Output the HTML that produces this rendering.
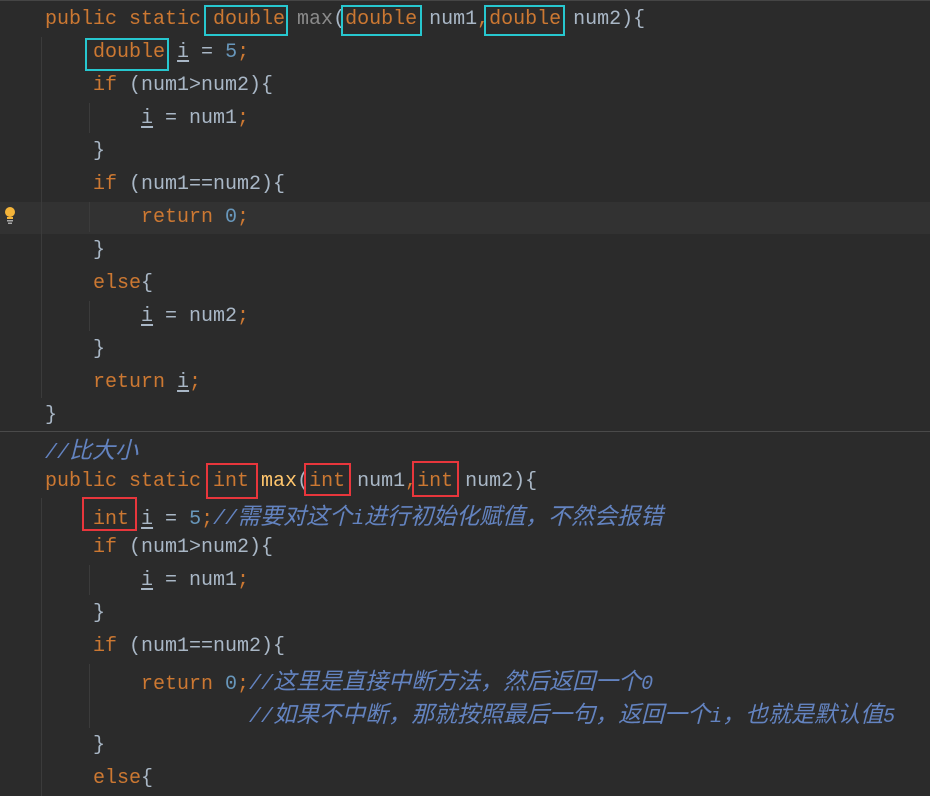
<!DOCTYPE html>
<html><head><meta charset="utf-8"><style>
body{margin:0;width:930px;height:796px;background:#2b2b2b;overflow:hidden;position:relative;font-family:"Liberation Mono","Noto Sans CJK SC",monospace;font-size:20px;color:#a9b7c6}
.l{position:absolute;left:45px;height:33px;line-height:33px;white-space:pre}
.k{color:#cc7832}.n{color:#6897bb}.g{color:#8a8a8a}.y{color:#ffc66d}
.c{color:#6383c0;font-style:italic}
.c b{font-weight:normal;font-family:"Noto Sans CJK SC",sans-serif;font-size:23px;line-height:33px}
.u{text-decoration:underline;text-underline-offset:3px}
.bx{position:absolute;border:2px solid #27c7cf;box-sizing:border-box}
.rb{position:absolute;border:2px solid #e8363c;box-sizing:border-box}
.gd{position:absolute;width:1px;background:#3b3b3b}
</style></head><body>
<div style="position:absolute;left:0;top:202px;width:930px;height:32px;background:#323232"></div>
<div style="position:absolute;left:0;top:431px;width:930px;height:1px;background:#4a4a4a"></div>
<div style="position:absolute;left:0;top:0;width:930px;height:1px;background:#454545"></div>
<div class="gd" style="left:41px;top:37px;height:361px"></div>
<div class="gd" style="left:89px;top:103px;height:30px"></div>
<div class="gd" style="left:89px;top:202px;height:30px"></div>
<div class="gd" style="left:89px;top:301px;height:30px"></div>
<div class="gd" style="left:41px;top:498px;height:298px"></div>
<div class="gd" style="left:89px;top:565px;height:30px"></div>
<div class="gd" style="left:89px;top:664px;height:64px"></div>
<svg style="position:absolute;left:3px;top:206px" width="14" height="20"><circle cx="7" cy="6" r="5" fill="#f4b43a"/><rect x="4" y="11" width="6" height="2" fill="#f4b43a"/><rect x="4" y="14" width="6" height="1.5" fill="#aaa"/><rect x="5" y="16.5" width="4" height="1.5" fill="#aaa"/></svg>

<div class="l" style="top:3px"><span class="k">public static double </span><span class="g">max</span>(<span class="k">double </span>num1<span class="k">,double </span>num2){</div>
<div class="l" style="top:36px">    <span class="k">double </span><span class="u">i</span> = <span class="n">5</span><span class="k">;</span></div>
<div class="l" style="top:69px">    <span class="k">if </span>(num1&gt;num2){</div>
<div class="l" style="top:102px">        <span class="u">i</span> = num1<span class="k">;</span></div>
<div class="l" style="top:135px">    }</div>
<div class="l" style="top:168px">    <span class="k">if </span>(num1==num2){</div>
<div class="l" style="top:201px">        <span class="k">return </span><span class="n">0</span><span class="k">;</span></div>
<div class="l" style="top:234px">    }</div>
<div class="l" style="top:267px">    <span class="k">else</span>{</div>
<div class="l" style="top:300px">        <span class="u">i</span> = num2<span class="k">;</span></div>
<div class="l" style="top:333px">    }</div>
<div class="l" style="top:366px">    <span class="k">return </span><span class="u">i</span><span class="k">;</span></div>
<div class="l" style="top:399px">}</div>
<div class="l" style="top:432px"><span class="c">//<b>比大小</b></span></div>
<div class="l" style="top:465px"><span class="k">public static int </span><span class="y">max</span>(<span class="k">int </span>num1<span class="k">,int </span>num2){</div>
<div class="l" style="top:498px">    <span class="k">int </span><span class="u">i</span> = <span class="n">5</span><span class="k">;</span><span class="c">//<b>需要对这个</b>i<b>进行初始化赋值，不然会报错</b></span></div>
<div class="l" style="top:531px">    <span class="k">if </span>(num1&gt;num2){</div>
<div class="l" style="top:564px">        <span class="u">i</span> = num1<span class="k">;</span></div>
<div class="l" style="top:597px">    }</div>
<div class="l" style="top:630px">    <span class="k">if </span>(num1==num2){</div>
<div class="l" style="top:663px">        <span class="k">return </span><span class="n">0</span><span class="k">;</span><span class="c">//<b>这里是直接中断方法，然后返回一个</b>0</span></div>
<div class="l" style="top:696px">                 <span class="c">//<b>如果不中断，那就按照最后一句，返回一个</b>i<b>，也就是默认值</b>5</span></div>
<div class="l" style="top:729px">    }</div>
<div class="l" style="top:762px">    <span class="k">else</span>{</div>

<div class="bx" style="left:204px;top:5px;width:84px;height:31px"></div>
<div class="bx" style="left:341px;top:5px;width:81px;height:31px"></div>
<div class="bx" style="left:484px;top:5px;width:81px;height:31px"></div>
<div class="bx" style="left:85px;top:38px;width:84px;height:33px"></div>
<div class="rb" style="left:206px;top:463px;width:52px;height:36px"></div>
<div class="rb" style="left:304px;top:463px;width:47px;height:33px"></div>
<div class="rb" style="left:412px;top:461px;width:47px;height:36px"></div>
<div class="rb" style="left:82px;top:497px;width:55px;height:34px"></div>
</body></html>
